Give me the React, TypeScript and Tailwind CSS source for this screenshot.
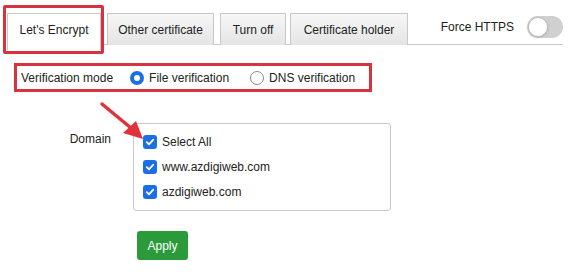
import React from "react";

// SSL settings panel: tabs, verification mode, domain list, apply

const tabs = ["Let's Encrypt", "Other certificate", "Turn off", "Certificate holder"];
const tabClasses = ["w-[94px]", "w-[107px] ml-[6px]", "w-[66px] ml-[6px]", "w-[118px] ml-[4px]"];

function Check() {
  return (
    <span className="w-[14px] h-[14px] rounded-[3px] bg-[#1b6fe4] flex items-center justify-center shrink-0">
      <svg width="10" height="10" viewBox="0 0 10 10">
        <path d="M1.8 5.2 L4 7.3 L8.3 2.6" stroke="white" strokeWidth="1.8" fill="none" strokeLinecap="round" strokeLinejoin="round" />
      </svg>
    </span>
  );
}

function Radio({ on }: { on?: boolean }) {
  return on ? (
    <span className="w-[14px] h-[14px] rounded-full bg-[#1b6fe4] flex items-center justify-center shrink-0">
      <span className="w-[6px] h-[6px] rounded-full bg-white" />
    </span>
  ) : (
    <span className="w-[14px] h-[14px] rounded-full border border-[#8a8a8a] bg-white shrink-0" />
  );
}

export default function App() {
  const domains = ["Select All", "www.azdigiweb.com", "azdigiweb.com"];
  return (
    <div className="relative w-[570px] h-[274px] bg-white text-[12px] text-[#222] whitespace-nowrap font-['Liberation_Sans',Arial,sans-serif] overflow-hidden">
      {/* tabs */}
      <div className="pt-[13px] pl-[7px] pr-[7px]">
        <div className="flex items-start h-[32px] border-b border-[#c8c8c8]">
          {tabs.map((t, i) =>
            i === 0 ? (
              <div
                key={t}
                className={`${tabClasses[i]} h-[37px] bg-white border border-[#c8c8c8] border-b-0 flex items-center justify-center pb-[5px] relative z-10 shrink-0`}
              >
                {t}
              </div>
            ) : (
              <div
                key={t}
                className={`${tabClasses[i]} h-[32px] bg-gradient-to-b from-[#f7f7f7] to-[#e4e4e4] border border-[#c8c8c8] border-b-0 flex items-center justify-center shrink-0`}
              >
                {t}
              </div>
            )
          )}
          <div className="ml-auto flex items-center h-[26px] gap-[13px] mt-[1px]">
            <span>Force HTTPS</span>
            <span className="w-[36px] h-[22px] rounded-full bg-[#d0d0d0] flex items-center pl-[1px]">
              <span className="w-[20px] h-[20px] rounded-full bg-white border border-[#bdbdbd] shadow-sm" />
            </span>
          </div>
        </div>
      </div>

      {/* verification mode */}
      <div className="mt-[18px] ml-[14px] w-[358px] h-[29px] border-[3px] border-[#d8323f] flex items-center pl-[4px]">
        <span>Verification mode</span>
        <span className="ml-[17px] flex items-center gap-[5px]">
          <Radio on />
          File verification
        </span>
        <span className="ml-[21px] flex items-center gap-[5px]">
          <Radio />
          DNS verification
        </span>
      </div>

      {/* domain */}
      <div className="mt-[31px] flex">
        <div className="w-[111px] text-right pt-[7px]">Domain</div>
        <div className="ml-[22px] w-[258px] h-[88px] border border-[#c8c8c8] rounded-[3px] pl-[9px] pt-[11px] flex flex-col gap-[11px]">
          {domains.map((d) => (
            <label key={d} className="flex items-center gap-[5px] h-[14px]">
              <Check />
              <span>{d}</span>
            </label>
          ))}
        </div>
      </div>

      <button className="mt-[20px] ml-[137px] w-[51px] h-[29px] bg-[#2b9a3a] text-white rounded-[3px] flex items-center justify-center">
        Apply
      </button>

      {/* annotations */}
      <div className="absolute left-[3px] top-[5px] w-[101px] h-[49px] border-[3px] border-[#d8323f] rounded-[2px] z-20" />
      <svg className="absolute left-0 top-0 z-20" width="570" height="274">
        <line x1="102" y1="104" x2="131" y2="128" stroke="#e0323a" strokeWidth="3.5" strokeLinecap="round" />
        <polygon points="143,139 123,133 136,121" fill="#e0323a" />
      </svg>
    </div>
  );
}
